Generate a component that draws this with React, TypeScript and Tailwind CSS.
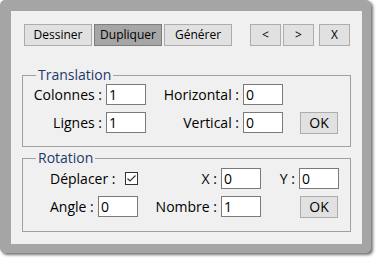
import type { ReactNode } from 'react';

const font = { fontFamily: '"Open Sans", "Noto Sans", sans-serif' };

function Btn({ children, w, pressed }: { children: ReactNode; w: string; pressed?: boolean }) {
  return (
    <div
      className={
        'h-[22px] flex items-center justify-center border text-[12px] text-black ' +
        w +
        (pressed ? ' bg-[#a6a6a6] border-[#7d7d7d]' : ' bg-[#e1e1e1] border-[#adadad]')
      }
    >
      {children}
    </div>
  );
}

function Field({ value }: { value: string }) {
  return (
    <div className="w-[40px] h-[21px] bg-white border border-[#7a7a7a] flex items-center pl-[2px] text-[14px] leading-none text-black">
      {value}
    </div>
  );
}

function Label({ children, w, left }: { children: ReactNode; w: string; left?: boolean }) {
  return (
    <div className={'text-[14px] leading-none text-black whitespace-nowrap ' + w + (left ? ' text-left' : ' text-right pr-[4px]')}>
      {children}
    </div>
  );
}

export default function App() {
  return (
    <div className="w-[376px] h-[259px] bg-white" style={font}>
      <div className="w-[371px] h-[253px] rounded-[5px] bg-[#a5a5a5] pt-[11px] pl-[11px] shadow-[2px_2px_3px_rgba(0,0,0,0.55)]">
        <div className="w-[351px] h-[233px] bg-[#f0f0f0] pt-[13px]">
          {/* top buttons */}
          <div className="flex pl-[13px]">
            <div className="flex gap-[2px]">
              <Btn w="w-[68px]">Dessiner</Btn>
              <Btn w="w-[68px]" pressed>Dupliquer</Btn>
              <Btn w="w-[68px]">Générer</Btn>
            </div>
            <div className="flex gap-[2px] ml-[18px]">
              <Btn w="w-[31px]">&lt;</Btn>
              <Btn w="w-[31px]">&gt;</Btn>
            </div>
            <div className="ml-[5px]">
              <Btn w="w-[31px]">X</Btn>
            </div>
          </div>

          {/* Translation */}
          <fieldset className="ml-[11px] mt-[21px] w-[329px] border border-[#a0a0a0] pt-[1px] pb-[13px]">
            <legend className="ml-[13px] px-[2px] text-[14px] leading-[16px] text-[#1d3a6c]">Translation</legend>
            <div className="flex items-center h-[21px]">
              <Label w="w-[83px]">Colonnes :</Label>
              <Field value="1" />
              <Label w="w-[97px]">Horizontal :</Label>
              <Field value="0" />
            </div>
            <div className="flex items-center h-[21px] mt-[7px]">
              <Label w="w-[83px]">Lignes :</Label>
              <Field value="1" />
              <Label w="w-[97px]">Vertical :</Label>
              <Field value="0" />
              <div className="ml-[17px]">
                <Btn w="w-[38px]">
                  <span className="text-[14px]">OK</span>
                </Btn>
              </div>
            </div>
          </fieldset>

          {/* Rotation */}
          <fieldset className="ml-[11px] mt-[3px] w-[329px] border border-[#a0a0a0] pt-[2px] pb-[14px]">
            <legend className="ml-[13px] px-[2px] text-[14px] leading-[16px] text-[#1d3a6c]">Rotation</legend>
            <div className="flex items-center h-[21px] pl-[27px]">
              <Label w="w-[75px]" left>
                Déplacer :
              </Label>
              <svg width="13" height="13" viewBox="0 0 13 13">
                <rect x="0.5" y="0.5" width="12" height="12" fill="white" stroke="#333" />
                <path d="M2.5 6.5 L5 9 L10.5 3.5" fill="none" stroke="#333" strokeWidth="1.2" />
              </svg>
              <Label w="w-[83px]">X :</Label>
              <Field value="0" />
              <Label w="w-[38px]">Y :</Label>
              <Field value="0" />
            </div>
            <div className="flex items-center h-[21px] mt-[7px] pl-[27px]">
              <Label w="w-[48px]" left>
                Angle :
              </Label>
              <Field value="0" />
              <Label w="w-[83px]">Nombre :</Label>
              <Field value="1" />
              <div className="ml-[39px]">
                <Btn w="w-[38px]">
                  <span className="text-[14px]">OK</span>
                </Btn>
              </div>
            </div>
          </fieldset>
        </div>
      </div>
    </div>
  );
}
